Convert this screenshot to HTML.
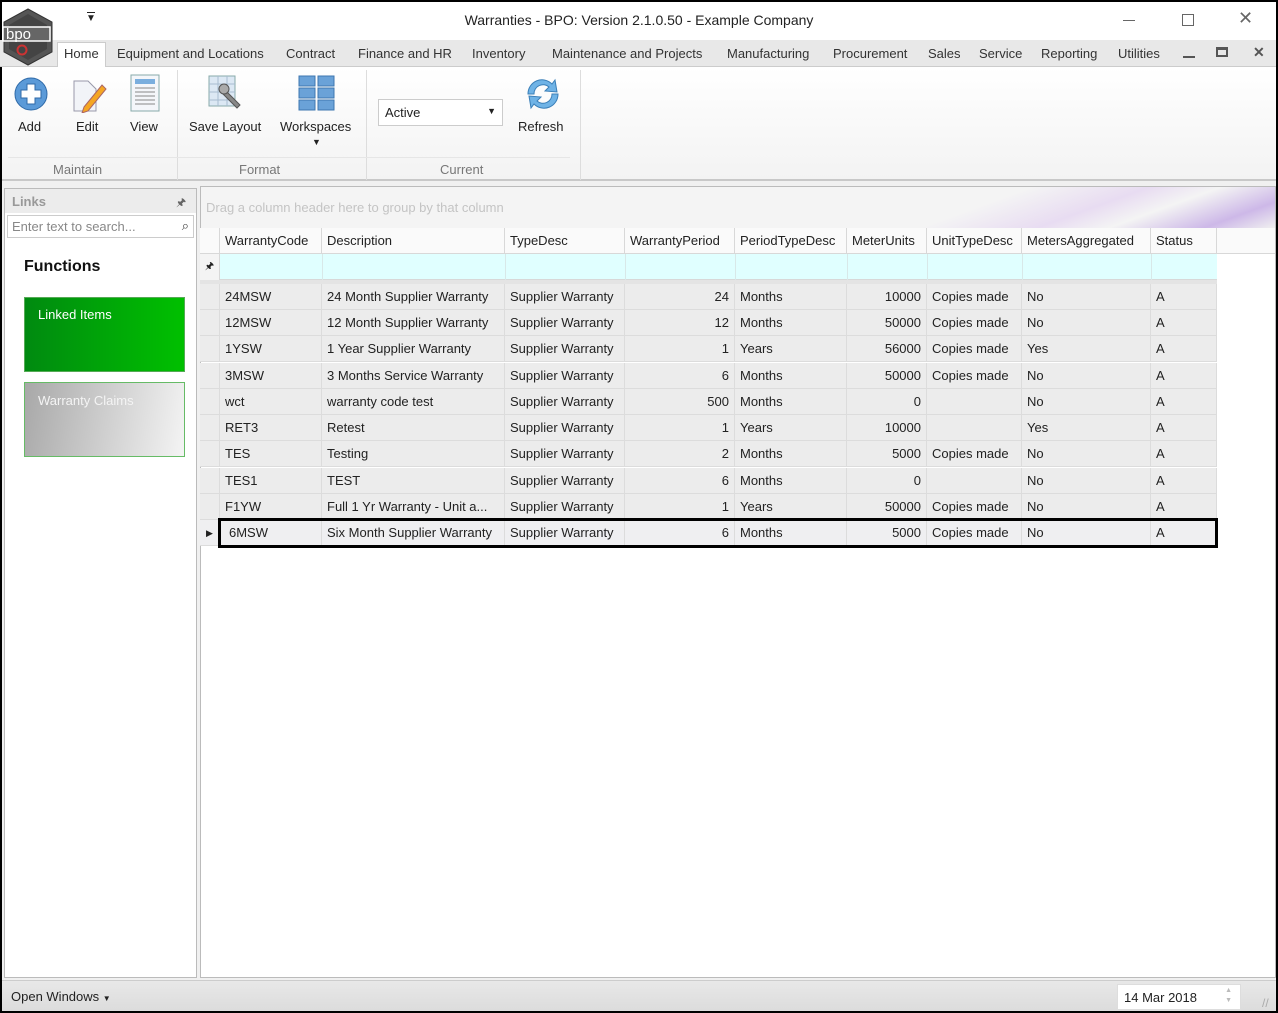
<!DOCTYPE html>
<html><head><meta charset="utf-8">
<style>
*{box-sizing:border-box;margin:0;padding:0}
body{width:1278px;height:1013px;background:#000;font-family:"Liberation Sans",sans-serif;font-size:13px;color:#222;position:relative;overflow:hidden}
.a{position:absolute}
#win{left:2px;top:2px;width:1274px;height:1009px;background:#f0f0f0}
.tab{position:absolute;top:46px;font-size:13px;color:#333}
.lbl{position:absolute;font-size:13px;color:#222;text-align:center}
.glbl{position:absolute;top:162px;color:#777;font-size:13px;text-align:center}
.row{position:absolute;left:200px;width:1017px;height:26px;background:#ececec;border-bottom:1px solid #dcdcdc}
.c{position:absolute;top:0;height:26px;line-height:26px;border-right:1px solid #dcdcdc;white-space:nowrap;overflow:hidden;padding:0 5px}
.r{text-align:right}
.h{position:absolute;top:228px;height:26px;line-height:26px;border-right:1px solid #d8d8d8;padding:0 5px;white-space:nowrap;background:#fafafa;border-bottom:1px solid #d8d8d8}
</style></head><body>
<div id="win" class="a"></div>
<div class="a" style="left:2px;top:2px;width:1274px;height:38px;background:#fff"></div>
<div class="a" style="left:0;top:40px;width:1276px;height:27px;background:#e8e8e8;border-bottom:1px solid #ccc"></div>
<svg class="a" style="left:2px;top:8px;z-index:5" width="52" height="58" viewBox="0 0 52 58"><polygon points="26,1 50,14 50,44 26,57 2,44 2,14" fill="#555" stroke="#333"/><polygon points="26,6 45,17 45,41 26,52 7,41 7,17" fill="#444"/><rect x="1" y="19" width="47" height="14" fill="#666" stroke="#fff" stroke-width="1.5"/><text x="4" y="31" fill="#fff" font-size="15" font-family="Liberation Sans">bpo</text><circle cx="20" cy="42" r="4.5" fill="none" stroke="#c33" stroke-width="2"/></svg>
<div class="a" style="left:86px;top:13px;font-size:10px">&#9660;</div>
<div class="a" style="left:87px;top:12px;width:8px;border-top:1px solid #222"></div>
<div class="a" style="left:0;top:12px;width:1278px;text-align:center;font-size:14px;color:#222">Warranties - BPO: Version 2.1.0.50 - Example Company</div>
<div class="a" style="left:1123px;top:20px;width:12px;border-top:1px solid #666"></div>
<div class="a" style="left:1182px;top:14px;width:12px;height:12px;border:1px solid #666"></div>
<div class="a" style="left:1238px;top:8px;font-size:18px;color:#666">&#x2715;</div>
<div class="a" style="left:57px;top:42px;width:49px;height:26px;background:#fff;border:1px solid #ccc;border-bottom:none"></div>
<div class="tab" style="left:64px">Home</div>
<div class="tab" style="left:117px">Equipment and Locations</div>
<div class="tab" style="left:286px">Contract</div>
<div class="tab" style="left:358px">Finance and HR</div>
<div class="tab" style="left:472px">Inventory</div>
<div class="tab" style="left:552px">Maintenance and Projects</div>
<div class="tab" style="left:727px">Manufacturing</div>
<div class="tab" style="left:833px">Procurement</div>
<div class="tab" style="left:928px">Sales</div>
<div class="tab" style="left:979px">Service</div>
<div class="tab" style="left:1041px">Reporting</div>
<div class="tab" style="left:1118px">Utilities</div>
<div class="a" style="left:1183px;top:56px;width:12px;border-top:2px solid #555"></div>
<div class="a" style="left:1216px;top:47px;width:12px;height:10px;border:2px solid #555;border-top-width:3px"></div>
<div class="a" style="left:1253px;top:44px;font-size:14px;font-weight:bold;color:#555">&#x2715;</div>
<div class="a" style="left:2px;top:67px;width:1274px;height:114px;background:linear-gradient(#fff,#f3f3f3);border-bottom:2px solid #c8c8c8"></div>
<div class="a" style="left:177px;top:70px;height:110px;border-left:1px solid #ddd"></div>
<div class="a" style="left:366px;top:70px;height:110px;border-left:1px solid #ddd"></div>
<div class="a" style="left:580px;top:70px;height:110px;border-left:1px solid #ddd"></div>
<div class="a" style="left:8px;top:157px;width:562px;border-top:1px solid #e6e6e6"></div>
<svg class="a" style="left:13px;top:76px" width="36" height="36"><circle cx="18" cy="18" r="16" fill="#5b9ad8" stroke="#2f6aa8"/><path d="M14 8h8v6h6v8h-6v6h-8v-6h-6v-8h6z" fill="#fff" stroke="#2f6aa8"/></svg>
<svg class="a" style="left:72px;top:75px" width="36" height="38"><path d="M2 6h14l8 8v22h-22z" fill="#f2f4f8" stroke="#99a"/><path d="M12 32l18-22 4 4-18 22-6 2z" fill="#f5a623" stroke="#a66"/></svg>
<svg class="a" style="left:130px;top:74px" width="30" height="38"><rect x="1" y="1" width="28" height="36" fill="#f4f6fa" stroke="#8aa"/><rect x="5" y="5" width="20" height="5" fill="#7aaede"/><path d="M5 14h20M5 18h20M5 22h20M5 26h20M5 30h20" stroke="#888"/></svg>
<div class="lbl" style="left:18px;top:119px">Add</div>
<div class="lbl" style="left:76px;top:119px">Edit</div>
<div class="lbl" style="left:130px;top:119px">View</div>
<svg class="a" style="left:208px;top:75px" width="38" height="36"><rect x="1" y="1" width="26" height="30" fill="#dce8f4" stroke="#8aa"/><path d="M1 9h26M1 17h26M1 25h26M10 1v30M19 1v30" stroke="#a8bcd0"/><path d="M16 14l16 16-3 3-16-16z" fill="#888" stroke="#555"/><circle cx="16" cy="14" r="5" fill="#aaa" stroke="#555"/></svg>
<svg class="a" style="left:298px;top:75px" width="38" height="36"><g fill="#6aa2d8" stroke="#3d77b0"><rect x="1" y="1" width="16" height="10"/><rect x="20" y="1" width="16" height="10"/><rect x="1" y="13" width="16" height="10"/><rect x="20" y="13" width="16" height="10"/><rect x="1" y="25" width="16" height="10"/><rect x="20" y="25" width="16" height="10"/></g></svg>
<div class="lbl" style="left:189px;top:119px">Save Layout</div>
<div class="lbl" style="left:280px;top:119px">Workspaces</div>
<div class="a" style="left:312px;top:137px;font-size:9px">&#9660;</div>
<div class="a" style="left:378px;top:99px;width:125px;height:27px;background:#fff;border:1px solid #ccc;padding:5px 6px">Active<span style="position:absolute;right:6px;top:6px;font-size:9px">&#9660;</span></div>
<svg class="a" style="left:522px;top:76px" width="42" height="36"><path d="M6 18a14 14 0 0 1 24-10l3-4 2 12-12-1 4-4a9 9 0 0 0-15 7z" fill="#6fb3e6" stroke="#3a7fb8"/><path d="M36 18a14 14 0 0 1-24 10l-3 4-2-12 12 1-4 4a9 9 0 0 0 15-7z" fill="#6fb3e6" stroke="#3a7fb8"/></svg>
<div class="lbl" style="left:518px;top:119px">Refresh</div>
<div class="glbl" style="left:53px">Maintain</div>
<div class="glbl" style="left:239px">Format</div>
<div class="glbl" style="left:440px">Current</div>
<div class="a" style="left:4px;top:188px;width:193px;height:790px;background:#fff;border:1px solid #bbb"></div>
<div class="a" style="left:5px;top:189px;width:191px;height:24px;background:#ececec"></div>
<div class="a" style="left:12px;top:194px;color:#999;font-weight:bold">Links</div>
<div class="a" style="left:176px;top:194px;font-size:11px;color:#666">&#x1F588;</div>
<div class="a" style="left:7px;top:215px;width:187px;height:23px;border:1px solid #ccc;background:#fff;color:#888;padding:3px 4px">Enter text to search...<span style="position:absolute;right:4px;top:2px;color:#444">&#x2315;</span></div>
<div class="a" style="left:24px;top:258px;font-weight:bold;font-size:16px;color:#111">Functions</div>
<div class="a" style="left:24px;top:297px;width:161px;height:75px;background:linear-gradient(90deg,#008a10,#00c000);border:1px solid #5a5"></div>
<div class="a" style="left:38px;top:307px;color:#fff">Linked Items</div>
<div class="a" style="left:24px;top:382px;width:161px;height:75px;background:linear-gradient(100deg,#a8a8a8,#f4f4f4);border:1px solid #6b6"></div>
<div class="a" style="left:38px;top:393px;color:#f4f4f4">Warranty Claims</div>
<div class="a" style="left:200px;top:186px;width:1076px;height:792px;background:#fff;border:1px solid #bbb"></div>
<div class="a" style="left:201px;top:187px;width:1074px;height:41px;background:linear-gradient(160deg,#f4f4f4 70%,#e8dcf2 80%,#f4f4f4 86%,#cdb8e8 94%,#f0f0f0)"></div>
<div class="a" style="left:206px;top:200px;color:#c4c4c4">Drag a column header here to group by that column</div>
<div class="a" style="left:200px;top:228px;width:1075px;height:26px;background:#fafafa;border-bottom:1px solid #d8d8d8"></div>
<div class="h" style="left:200px;width:20px"></div>
<div class="h" style="left:220px;width:102px">WarrantyCode</div>
<div class="h" style="left:322px;width:183px">Description</div>
<div class="h" style="left:505px;width:120px">TypeDesc</div>
<div class="h" style="left:625px;width:110px">WarrantyPeriod</div>
<div class="h" style="left:735px;width:112px">PeriodTypeDesc</div>
<div class="h" style="left:847px;width:80px">MeterUnits</div>
<div class="h" style="left:927px;width:95px">UnitTypeDesc</div>
<div class="h" style="left:1022px;width:129px">MetersAggregated</div>
<div class="h" style="left:1151px;width:66px">Status</div>
<div class="a" style="left:200px;top:254px;width:20px;height:26px;background:#f4f4f4;border-right:1px solid #d8d8d8;font-size:10px;text-align:center;line-height:26px">&#x1F588;</div>
<div class="a" style="left:220px;top:254px;width:997px;height:26px;background:#e0ffff;border-bottom:1px solid #d8d8d8"></div>
<div class="a" style="left:322px;top:254px;height:26px;border-left:1px solid #d8e8e8"></div>
<div class="a" style="left:505px;top:254px;height:26px;border-left:1px solid #d8e8e8"></div>
<div class="a" style="left:625px;top:254px;height:26px;border-left:1px solid #d8e8e8"></div>
<div class="a" style="left:735px;top:254px;height:26px;border-left:1px solid #d8e8e8"></div>
<div class="a" style="left:847px;top:254px;height:26px;border-left:1px solid #d8e8e8"></div>
<div class="a" style="left:927px;top:254px;height:26px;border-left:1px solid #d8e8e8"></div>
<div class="a" style="left:1022px;top:254px;height:26px;border-left:1px solid #d8e8e8"></div>
<div class="a" style="left:1151px;top:254px;height:26px;border-left:1px solid #d8e8e8"></div>
<div class="a" style="left:200px;top:280px;width:1017px;height:4px;background:#e4e4e4"></div>

<div class="row" style="top:284px"><div class="c" style="left:0;width:20px"></div><div class="c" style="left:20px;width:102px">24MSW</div><div class="c" style="left:122px;width:183px">24 Month Supplier Warranty</div><div class="c" style="left:305px;width:120px">Supplier Warranty</div><div class="c r" style="left:425px;width:110px">24</div><div class="c" style="left:535px;width:112px">Months</div><div class="c r" style="left:647px;width:80px">10000</div><div class="c" style="left:727px;width:95px">Copies made</div><div class="c" style="left:822px;width:129px">No</div><div class="c" style="left:951px;width:66px">A</div></div>
<div class="row" style="top:310px"><div class="c" style="left:0;width:20px"></div><div class="c" style="left:20px;width:102px">12MSW</div><div class="c" style="left:122px;width:183px">12 Month Supplier Warranty</div><div class="c" style="left:305px;width:120px">Supplier Warranty</div><div class="c r" style="left:425px;width:110px">12</div><div class="c" style="left:535px;width:112px">Months</div><div class="c r" style="left:647px;width:80px">50000</div><div class="c" style="left:727px;width:95px">Copies made</div><div class="c" style="left:822px;width:129px">No</div><div class="c" style="left:951px;width:66px">A</div></div>
<div class="row" style="top:336px"><div class="c" style="left:0;width:20px"></div><div class="c" style="left:20px;width:102px">1YSW</div><div class="c" style="left:122px;width:183px">1 Year Supplier Warranty</div><div class="c" style="left:305px;width:120px">Supplier Warranty</div><div class="c r" style="left:425px;width:110px">1</div><div class="c" style="left:535px;width:112px">Years</div><div class="c r" style="left:647px;width:80px">56000</div><div class="c" style="left:727px;width:95px">Copies made</div><div class="c" style="left:822px;width:129px">Yes</div><div class="c" style="left:951px;width:66px">A</div></div>
<div class="row" style="top:363px"><div class="c" style="left:0;width:20px"></div><div class="c" style="left:20px;width:102px">3MSW</div><div class="c" style="left:122px;width:183px">3 Months Service Warranty</div><div class="c" style="left:305px;width:120px">Supplier Warranty</div><div class="c r" style="left:425px;width:110px">6</div><div class="c" style="left:535px;width:112px">Months</div><div class="c r" style="left:647px;width:80px">50000</div><div class="c" style="left:727px;width:95px">Copies made</div><div class="c" style="left:822px;width:129px">No</div><div class="c" style="left:951px;width:66px">A</div></div>
<div class="row" style="top:389px"><div class="c" style="left:0;width:20px"></div><div class="c" style="left:20px;width:102px">wct</div><div class="c" style="left:122px;width:183px">warranty code test</div><div class="c" style="left:305px;width:120px">Supplier Warranty</div><div class="c r" style="left:425px;width:110px">500</div><div class="c" style="left:535px;width:112px">Months</div><div class="c r" style="left:647px;width:80px">0</div><div class="c" style="left:727px;width:95px"></div><div class="c" style="left:822px;width:129px">No</div><div class="c" style="left:951px;width:66px">A</div></div>
<div class="row" style="top:415px"><div class="c" style="left:0;width:20px"></div><div class="c" style="left:20px;width:102px">RET3</div><div class="c" style="left:122px;width:183px">Retest</div><div class="c" style="left:305px;width:120px">Supplier Warranty</div><div class="c r" style="left:425px;width:110px">1</div><div class="c" style="left:535px;width:112px">Years</div><div class="c r" style="left:647px;width:80px">10000</div><div class="c" style="left:727px;width:95px"></div><div class="c" style="left:822px;width:129px">Yes</div><div class="c" style="left:951px;width:66px">A</div></div>
<div class="row" style="top:441px"><div class="c" style="left:0;width:20px"></div><div class="c" style="left:20px;width:102px">TES</div><div class="c" style="left:122px;width:183px">Testing</div><div class="c" style="left:305px;width:120px">Supplier Warranty</div><div class="c r" style="left:425px;width:110px">2</div><div class="c" style="left:535px;width:112px">Months</div><div class="c r" style="left:647px;width:80px">5000</div><div class="c" style="left:727px;width:95px">Copies made</div><div class="c" style="left:822px;width:129px">No</div><div class="c" style="left:951px;width:66px">A</div></div>
<div class="row" style="top:468px"><div class="c" style="left:0;width:20px"></div><div class="c" style="left:20px;width:102px">TES1</div><div class="c" style="left:122px;width:183px">TEST</div><div class="c" style="left:305px;width:120px">Supplier Warranty</div><div class="c r" style="left:425px;width:110px">6</div><div class="c" style="left:535px;width:112px">Months</div><div class="c r" style="left:647px;width:80px">0</div><div class="c" style="left:727px;width:95px"></div><div class="c" style="left:822px;width:129px">No</div><div class="c" style="left:951px;width:66px">A</div></div>
<div class="row" style="top:494px"><div class="c" style="left:0;width:20px"></div><div class="c" style="left:20px;width:102px">F1YW</div><div class="c" style="left:122px;width:183px">Full 1 Yr Warranty - Unit a...</div><div class="c" style="left:305px;width:120px">Supplier Warranty</div><div class="c r" style="left:425px;width:110px">1</div><div class="c" style="left:535px;width:112px">Years</div><div class="c r" style="left:647px;width:80px">50000</div><div class="c" style="left:727px;width:95px">Copies made</div><div class="c" style="left:822px;width:129px">No</div><div class="c" style="left:951px;width:66px">A</div></div>
<div class="row" style="top:520px;background:#efeff1"><div class="c" style="left:0;width:20px;font-size:9px;padding:0 6px">&#9654;</div><div class="c" style="left:20px;width:102px;padding-left:9px">6MSW</div><div class="c" style="left:122px;width:183px">Six Month Supplier Warranty</div><div class="c" style="left:305px;width:120px">Supplier Warranty</div><div class="c r" style="left:425px;width:110px">6</div><div class="c" style="left:535px;width:112px">Months</div><div class="c r" style="left:647px;width:80px">5000</div><div class="c" style="left:727px;width:95px">Copies made</div><div class="c" style="left:822px;width:129px">No</div><div class="c" style="left:951px;width:66px">A</div></div>
<div class="a" style="left:218px;top:518px;width:1000px;height:30px;border:3px solid #000"></div>
<div class="a" style="left:2px;top:980px;width:1274px;height:31px;background:linear-gradient(#e8e8e8,#dcdcdc);border-top:1px solid #ccc"></div>
<div class="a" style="left:11px;top:989px;font-size:13px">Open Windows <span style="font-size:8px">&#9660;</span></div>
<div class="a" style="left:1117px;top:984px;width:124px;height:26px;background:#fff;border:1px solid #ddd;padding:5px 6px">14 Mar 2018<span style="position:absolute;right:8px;top:1px;font-size:7px;color:#bbb;line-height:10px">&#9650;<br>&#9660;</span></div>
<div class="a" style="left:1262px;top:996px;font-size:12px;color:#aaa">//</div>
</body></html>
